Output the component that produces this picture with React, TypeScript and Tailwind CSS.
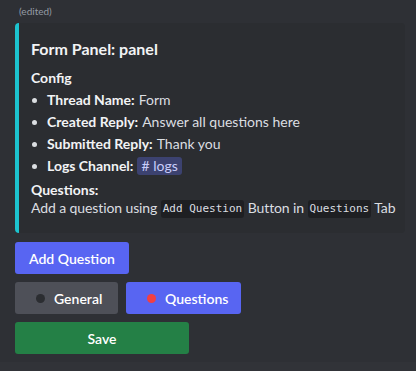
const font = { fontFamily: 'Lato, "Noto Sans", sans-serif' };

const config = [
  { label: "Thread Name:", value: "Form" },
  { label: "Created Reply:", value: "Answer all questions here" },
  { label: "Submitted Reply:", value: "Thank you" },
];

function Code({ children }: { children: React.ReactNode }) {
  return (
    <code className="inline-block rounded-[3px] bg-[#1e1f22] px-[2px] align-middle font-['DejaVu_Sans_Mono',monospace] text-[11px] leading-[18px] tracking-normal text-[#dbdee1]">
      {children}
    </code>
  );
}

function Bullet() {
  return (
    <span className="flex w-[16px] shrink-0 pl-[1px]">
      <span className="h-[5px] w-[5px] rounded-full bg-[#dbdee1]" />
    </span>
  );
}

export default function App() {
  return (
    <div className="min-h-[371px] bg-[#313338]" style={font}>
      <div className="flex h-[362px] flex-col bg-[#2e3035] pl-[15px] pt-[4px]">
        <div className="pl-[4px] text-[10px] leading-[14px] text-[#949ba4]">(edited)</div>

        {/* embed */}
        <div className="mt-[5px] flex w-[390px] rounded-[4px] bg-[#2b2d31]">
          <div className="w-[4px] shrink-0 rounded-l-[4px] bg-[#1cc3cf]" />
          <div className="flex flex-col pb-[16px] pl-[12px] pt-[15px] text-[14px] text-[#dbdee1]">
            <div className="text-[16px] font-bold leading-[22px] text-[#f2f3f5]">Form Panel: panel</div>
            <div className="mt-[9px] font-bold leading-[18px] text-[#f2f3f5]">Config</div>
            <ul className="mt-[2px] flex flex-col">
              {config.map((row) => (
                <li key={row.label} className="flex items-center leading-[22px]">
                  <Bullet />
                  <span className="font-bold text-[#f2f3f5]">{row.label}</span>
                  <span className="ml-[4px]">{row.value}</span>
                </li>
              ))}
              <li className="flex items-center leading-[22px]">
                <Bullet />
                <span className="font-bold text-[#f2f3f5]">Logs Channel:</span>
                <span className="ml-[4px] rounded-[3px] bg-[#3c4270] px-[4px] leading-[18px] text-[#c9cdfb]"># logs</span>
              </li>
            </ul>
            <div className="mt-[4px] font-bold leading-[18px] text-[#f2f3f5]">Questions:</div>
            <div className="h-[18px] whitespace-nowrap leading-[18px] tracking-[-0.1px]">
              Add a question using <Code>Add Question</Code> Button in <Code>Questions</Code> Tab
            </div>
          </div>
        </div>

        {/* components */}
        <div className="mt-[9px] flex flex-col gap-[8px] text-[14px] font-semibold text-white">
          <div className="flex">
            <button className="h-[32px] w-[114px] rounded-[3px] bg-[#5865f2]">Add Question</button>
          </div>
          <div className="flex gap-[8px]">
            <button className="flex h-[32px] w-[103px] items-center gap-[9px] rounded-[3px] bg-[#4e5058] pl-[21px]">
              <span className="h-[9px] w-[9px] rounded-full bg-[#2b2d31]" />
              General
            </button>
            <button className="flex h-[32px] w-[115px] items-center gap-[9px] rounded-[3px] bg-[#5865f2] pl-[21px]">
              <span className="h-[9px] w-[9px] rounded-full bg-[#f23f43]" />
              Questions
            </button>
          </div>
          <div className="flex">
            <button className="h-[32px] w-[174px] rounded-[3px] bg-[#248046]">Save</button>
          </div>
        </div>
      </div>
    </div>
  );
}
